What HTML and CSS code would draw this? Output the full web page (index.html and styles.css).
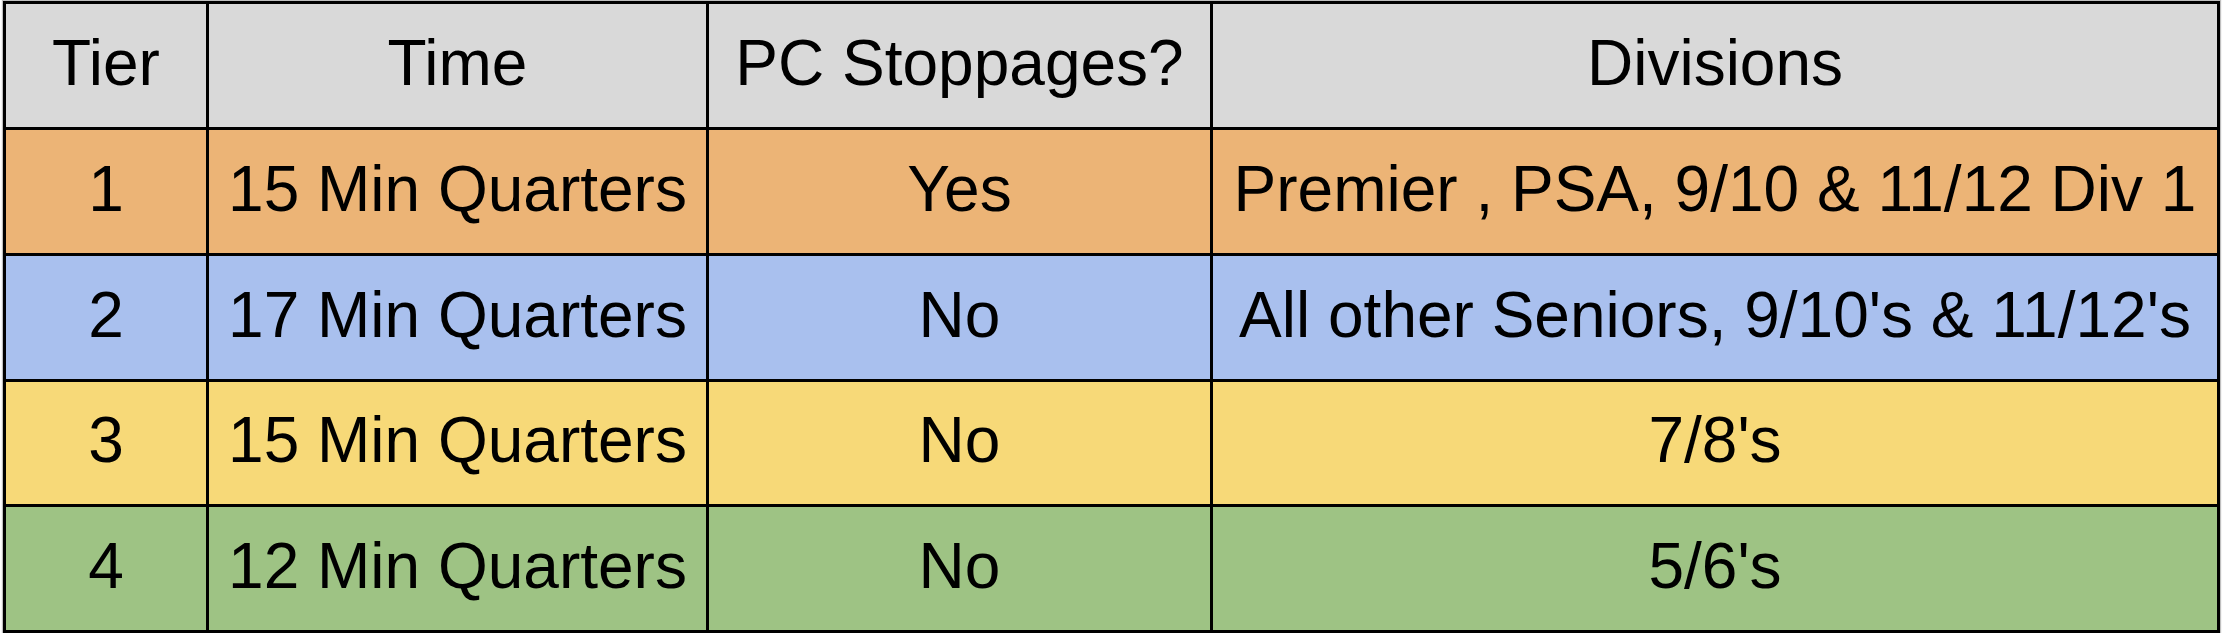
FILE: index.html
```html
<!DOCTYPE html>
<html>
<head>
<meta charset="utf-8">
<link rel="stylesheet" href="styles.css">
</head>
<body>
<div class="sheet">
  <div class="cell head">Tier</div>
  <div class="cell head">Time</div>
  <div class="cell head">PC Stoppages?</div>
  <div class="cell head">Divisions</div>

  <div class="cell t1">1</div>
  <div class="cell t1">15 Min Quarters</div>
  <div class="cell t1">Yes</div>
  <div class="cell t1">Premier , PSA, 9/10 &amp; 11/12 Div 1</div>

  <div class="cell t2">2</div>
  <div class="cell t2">17 Min Quarters</div>
  <div class="cell t2">No</div>
  <div class="cell t2">All other Seniors, 9/10's &amp; 11/12's</div>

  <div class="cell t3">3</div>
  <div class="cell t3">15 Min Quarters</div>
  <div class="cell t3">No</div>
  <div class="cell t3">7/8's</div>

  <div class="cell t4">4</div>
  <div class="cell t4">12 Min Quarters</div>
  <div class="cell t4">No</div>
  <div class="cell t4">5/6's</div>
</div>
</body>
</html>
```

FILE: styles.css
```css
html, body {
  margin: 0;
  padding: 0;
  background: #ffffff;
}

body {
  padding: 1px 0 0 3px;
  font-family: "Liberation Sans", Arial, sans-serif;
}

.sheet {
  display: grid;
  grid-template-columns: 200px 497px 501px 1004px;
  grid-template-rows: 123px 123px 123px 122px 123px;
  gap: 3px;
  padding: 3px;
  background: #000000;
  width: max-content;
  box-shadow: 0 0 1px 1px rgba(0, 0, 0, 0.25);
}

.cell {
  display: flex;
  align-items: center;
  justify-content: center;
  font-size: 64px;
  color: #000000;
  white-space: nowrap;
  padding-bottom: 6px;
  box-sizing: border-box;
}

.head { background: #d9d9d9; }
.t1 { background: #ecb476; }
.t2 { background: #a9c0ee; }
.t3 { background: #f7d978; }
.t4 { background: #9ec384; }
```
